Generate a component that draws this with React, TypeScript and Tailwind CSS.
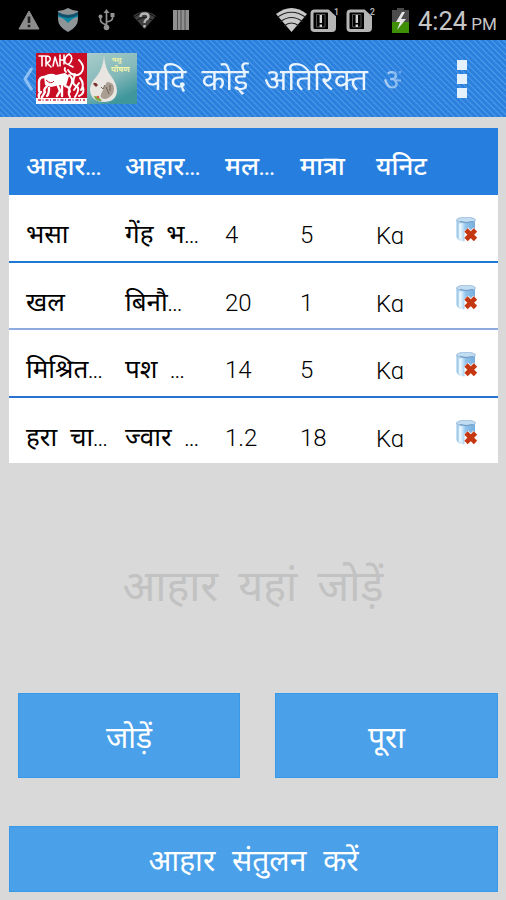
import React from 'react';

const latin = "font-['Roboto','Noto_Sans',sans-serif]";
const hindi = "font-['Noto_Sans_Devanagari','Noto_Sans',sans-serif]";

const rows = [
  { name: 'भसा', item: 'गेंह भ...', price: '4', qty: '5', style: 'h-[68px] border-b-2 border-[#1f78d1]' },
  { name: 'खल', item: 'बिनौ...', price: '20', qty: '1', style: 'h-[67px] border-b-2 border-[#8faade]' },
  { name: 'मिश्रित...', item: 'पश ...', price: '14', qty: '5', style: 'h-[68px] border-b-2 border-[#2a74cf]' },
  { name: 'हरा चा...', item: 'ज्वार ...', price: '1.2', qty: '18', style: 'h-[65px]' },
];

function Warning() {
  return (
    <svg width="22" height="20" viewBox="0 0 22 20">
      <path d="M11 1 21 19H1Z" fill="#8d8d8d" stroke="#8d8d8d" strokeLinejoin="round" />
      <path d="M11 6.500v6.500M11 14.700v2.500" stroke="#222" strokeWidth="2.600" />
    </svg>
  );
}

function Shield() {
  return (
    <svg width="20" height="24" viewBox="0 0 20 24">
      <path d="M0 3Q6 2.500 10 0q4 2.500 10 3v8q0 8-10 13Q0 19 0 11Z" fill="#8f9497" />
      <path d="M0 5q5 3 10 3t10-3v4q-5 0-10 6Q5 9 0 9Z" fill="#0788a5" />
      <path d="M0 4q5 3 10 3t10-3v3q-5 3-10 3T0 7Z" fill="#12506b" />
    </svg>
  );
}

function Usb() {
  return (
    <svg width="17" height="22" viewBox="0 0 17 22" fill="none" stroke="#929292" strokeWidth="1.7">
      <path d="M8.5 3v15M8.5 16Q2.5 14 2.5 11V8M8.500 13q6-1 6-4V6" />
      <path d="m8.500 0 3 4h-6Z" fill="#929292" stroke="none" />
      <circle cx="8.500" cy="18.500" r="2.800" fill="#929292" stroke="none" />
      <circle cx="2.500" cy="7.500" r="2" fill="#929292" stroke="none" />
      <path d="M12.500 4h4v4h-4Z" fill="#929292" stroke="none" />
    </svg>
  );
}

function WifiUnknown() {
  return (
    <svg width="23" height="19" viewBox="0 0 23 19">
      <path d="M0 5Q11.500-4 23 5L11.500 18Z" fill="#3f3f3f" />
      <path d="M1 6Q11.500-2 22 6M4 9q7.500-5 15 0" fill="none" stroke="#111" />
      <path d="M7.500 6q0-3.500 4-3.500t4 3q0 2-2.500 3.200Q11.500 9.500 11.500 12M11.500 14v2.500" fill="none" stroke="#b5b5b5" strokeWidth="2.400" />
    </svg>
  );
}

function Bars() {
  return (
    <svg width="16" height="20" viewBox="0 0 16 20">
      <path d="M0 0h16v20H0Z" fill="#8f8f8f" />
      <path d="M4.500 0v20M8 0v20M12 0v20" stroke="#4c4c4c" />
    </svg>
  );
}

function Wifi() {
  return (
    <svg width="31" height="24" viewBox="0 0 31 24">
      <path d="M0 6Q15.500-6 31 6L15.500 24Z" fill="#c9c9c9" />
      <path d="M1 9.500Q15.500-1 30 9.500M4 14q11.500-9 23 0M8 18q7.500-6 15 0" fill="none" stroke="#222" strokeWidth="1.200" />
    </svg>
  );
}

function Sim({ id }: { id: string }) {
  return (
    <svg width="29" height="26" viewBox="0 0 29 26">
      <path d="M4.500 4H18l6.500 6v11q0 2.500-2.500 2.500H4.500Q2 23.500 2 21V6.500Q2 4 4.500 4Z" fill="none" stroke="#b5b5b5" strokeWidth="3" />
      <path d="M18 4l7 6v12l-3 1h-4Z" fill="#b5b5b5" />
      <path d="M6.500 7.500H15v12.500H6.500Z" fill="none" stroke="#555" />
      <path d="M10.800 8v8M10.800 17.500v2.500" stroke="#d2d2d2" strokeWidth="2.400" />
      <text x="24" y="7.500" fontSize="8.500" fontWeight="700" fontFamily="Roboto" fill="#b0b0b0">{id}</text>
    </svg>
  );
}

function Battery() {
  return (
    <svg width="17" height="25" viewBox="0 0 17 25">
      <path d="M5 0h7v2h5v23H0V2h5Z" fill="#4b4b4b" />
      <path d="M0 14h17v11H0Z" fill="#3f8f06" />
      <path d="M10 4 4 14h4l-3 8 9-11H9l4-7Z" fill="#e6e6e6" />
    </svg>
  );
}

function CowLogo() {
  return (
    <svg width="51" height="51" viewBox="0 0 51 51">
      <path d="M0 0h51v51H0Z" fill="#c90d24" />
      <g fill="none" stroke="#fff" strokeLinecap="round" strokeLinejoin="round">
        <path d="M3 3h6M6 3v10M10 13V3q5 0 4 4-1 3-4 2l5 5M17 13l2-9 3 9M24 2v11M24 7h4M28 2v9M33 1q-5 3-4 8 2 4 5 1 4-6-1-9M33 12l4 2" strokeWidth="1.600" />
        <path d="M43 7q7 7 2 13-4 4-10 1M32 17q3 5 7 4M30 19q-2-2-1-4" strokeWidth="1.800" />
        <path d="M8 24q-5 0-5 5v9M5 39q-3 2-2 5M11 33q-4 4-2 6l-3 5M13 35q0 6-2 8M22 33l2 5-3 5M26 31v12" strokeWidth="2.400" />
        <path d="M33 22q5 4 2 10-4 7-1 12M39 22q-4 9 1 11t-1 11M44 25q5 6 1 12M43 30l-5 7M29 33q5 1 5 6M47 34q2 7-4 9" strokeWidth="2" />
      </g>
      <path d="M8 23q7-4 12-1l9-2 4 3-3 10-6-1-9 2-6-2Z" fill="#fff" />
      <path d="M10 27q5 5 8 1" fill="none" stroke="#c90d24" />
      <path d="M0 45h51v6H0Z" fill="#fff" />
      <path d="M2 47h47" stroke="#d65c69" strokeWidth="2" strokeDasharray="3 1.500 1 2" />
    </svg>
  );
}

function MilkLogo() {
  return (
    <svg width="50" height="51" viewBox="0 0 50 51">
      <defs>
        <linearGradient id="milkBack" x1="0" y1="0" x2="0.500" y2="1">
          <stop offset="0" stopColor="#a9cccb" />
          <stop offset="0.600" stopColor="#83b8b9" />
          <stop offset="1" stopColor="#3f969b" />
        </linearGradient>
      </defs>
      <path d="M0 0h50v51H0Z" fill="url(#milkBack)" />
      <path d="M17 3q1 13 7 20 6 8 6 15-1 11-13 11-13 0-14-12 0-7 7-14 6-8 7-20Z" fill="#e9e6e2" />
      <path d="M20 29q7 0 7 7t-8 10q-7 0-5-5Z" fill="#aa9d91" />
      <path d="M6 31q2-3 5 1l-2 2Z" fill="#76322d" />
      <path d="m14 34 2 2 2-4M19 34l3 7M23 32v6" stroke="#6d6257" fill="none" />
      <path d="M7 43q5 0 8 5Q8 49 7 43Z" fill="#7daa4b" />
      <circle cx="11" cy="44" r="1.300" fill="#df5b3d" />
      <text x="25" y="9" fontSize="7" fontWeight="700" fontFamily="Noto Sans" fill="#eff3a8">पशु</text>
      <text x="24" y="19" fontSize="8" fontWeight="700" fontFamily="Noto Sans" fill="#eff3a8">पोषण</text>
    </svg>
  );
}

function DeleteIcon() {
  return (
    <svg width="22" height="26" viewBox="0 0 22 26">
      <defs>
        <linearGradient id="can" x1="0" x2="1" y1="0" y2="0">
          <stop offset="0" stopColor="#8fbfe6" />
          <stop offset="0.250" stopColor="#e2f2fd" />
          <stop offset="0.500" stopColor="#8fc3ec" />
          <stop offset="1" stopColor="#76addc" />
        </linearGradient>
      </defs>
      <path d="M0.500 3v17q1 4 8 4.500V14h10.500V3Z" fill="url(#can)" />
      <path d="M4 7v15" stroke="#e7f5ff" strokeWidth="2" />
      <ellipse cx="10" cy="3" rx="9.500" ry="2.800" fill="#c2dcf2" stroke="#88afd2" strokeWidth="0.700" />
      <path d="M4 4.500q6 2 13 0" stroke="#6798c4" fill="none" />
      <path d="m10 12.500 9.500 9.500m0-9.500-9.500 9.500" stroke="#f6eeee" strokeWidth="6" />
      <path d="m10 13 9.500 9.500m0-9.500-9.500 9.500" stroke="#c43710" strokeWidth="4.600" />
    </svg>
  );
}

function Label({ text, dots }: { text: string; dots: string }) {
  const cut = text.endsWith('...');
  return (
    <>
      {cut ? text.slice(0, -3) : text}
      {cut && <span className={`font-['Roboto'] text-[18px] ${dots}`}>...</span>}
    </>
  );
}

function Header({ text }: { text: string }) {
  return <div className={`${hindi} whitespace-pre pt-[21px] text-[26px] font-medium leading-[40px] text-white`}><Label text={text} dots="font-bold" /></div>;
}

function Cell({ text }: { text: string }) {
  return <div className={`${hindi} whitespace-pre pt-[22px] text-[26px] leading-[40px] text-black [word-spacing:6px]`}><Label text={text} dots="font-normal" /></div>;
}

function NumberCell({ text }: { text: string }) {
  return <div className={`${latin} whitespace-pre pt-[20px] text-[24px] font-light leading-[40px] text-black`}>{text}</div>;
}

// The unit sits in a fixed-height line that trims the descender.
function UnitCell({ text }: { text: string }) {
  return <div className={`${latin} h-[49px] overflow-hidden whitespace-pre pt-[21px] text-[24px] font-light leading-[40px] text-black`}>{text}</div>;
}

const grid = 'grid grid-cols-[99px_100px_75px_76px_79px_34px] pl-[17px]';

export default function App() {
  return (
    <div className="flex h-[900px] w-[506px] flex-col overflow-hidden bg-[#d9d9d9]">
      <div className="flex h-10 shrink-0 items-center bg-black pl-[18px]">
        <Warning />
        <span className="ml-[18px] flex"><Shield /></span>
        <span className="ml-[20px] flex"><Usb /></span>
        <span className="ml-[18px] flex"><WifiUnknown /></span>
        <span className="ml-[17px] flex"><Bars /></span>
        <span className="ml-[87px] flex"><Wifi /></span>
        <span className="ml-[3px] flex"><Sim id="1" /></span>
        <span className="ml-[7px] flex"><Sim id="2" /></span>
        <span className="ml-[17px] flex"><Battery /></span>
        <span className={`${latin} ml-[9px] mt-[4px] text-[25.500px] leading-none text-[#c6c6c6]`}>4:24</span>
        <span className={`${latin} ml-[4px] mt-[9px] text-[17px] leading-none text-[#c6c6c6]`}>PM</span>
      </div>

      <div className="flex h-[77px] shrink-0 items-center bg-[repeating-linear-gradient(45deg,#2b7fdd_0px,#2b7fdd_2.2px,#4f9dea_3.2px,#2b7fdd_4.240px)] pl-[22px]">
        <svg width="14" height="24" viewBox="0 0 14 24"><path d="M10 1 3 12l7 11" fill="none" stroke="#8fc1f4" strokeWidth="3" /></svg>
        <CowLogo />
        <MilkLogo />
        <div className={`${hindi} ml-[7px] h-[60px] w-[257px] overflow-hidden whitespace-pre bg-gradient-to-r from-[#eaf4ff] from-88% to-[#eaf4ff]/40 bg-clip-text pt-[4px] text-[31px] leading-[60px] text-transparent [word-spacing:7px]`}>यदि कोई अतिरिक्त अ</div>
        <div className="ml-[56px] flex flex-col gap-[4px]">
          <i className="h-[10px] w-[10px] bg-[#e3f1ff]" />
          <i className="h-[10px] w-[10px] bg-[#e3f1ff]" />
          <i className="h-[10px] w-[10px] bg-[#e3f1ff]" />
        </div>
      </div>

      <div className="ml-[9px] mt-[11px] w-[489px] bg-white">
        <div className={`${grid} h-[67px] bg-[#267fdf]`}>
          <Header text="आहार..." />
          <Header text="आहार..." />
          <Header text="मल..." />
          <Header text="मात्रा" />
          <Header text="यनिट" />
        </div>
        {rows.map((r, i) => (
          <div key={i} className={`${grid} ${r.style}`}>
            <Cell text={r.name} />
            <Cell text={r.item} />
            <NumberCell text={r.price} />
            <NumberCell text={r.qty} />
            <UnitCell text="Kg" />
            <div className="pl-[1px] pt-[22px]"><DeleteIcon /></div>
          </div>
        ))}
      </div>

      <div className={`${hindi} mt-[98px] h-[60px] whitespace-pre text-center text-[43px] leading-[60px] text-[#c2c2c2] [word-spacing:9px]`}>आहार यहां जोड़ें</div>

      <div className="ml-[18px] mt-auto grid h-[85px] shrink-0 grid-cols-[222px_223px] gap-[35px]">
        <button className={`${hindi} border border-[#379ae8] bg-[#4aa1e9] pt-[10px] text-[30px] leading-[40px] text-white`}>जोड़ें</button>
        <button className={`${hindi} border border-[#379ae8] bg-[#4aa1e9] pt-[10px] text-[30px] leading-[40px] text-white`}>पूरा</button>
      </div>
      <button className={`${hindi} mb-[8px] ml-[9px] mt-[48px] h-[66px] w-[489px] shrink-0 border border-[#379ae8] bg-[#4aa1e9] pt-[10px] text-[30px] leading-[40px] text-white [word-spacing:9px]`}>आहार संतुलन करें</button>
    </div>
  );
}
